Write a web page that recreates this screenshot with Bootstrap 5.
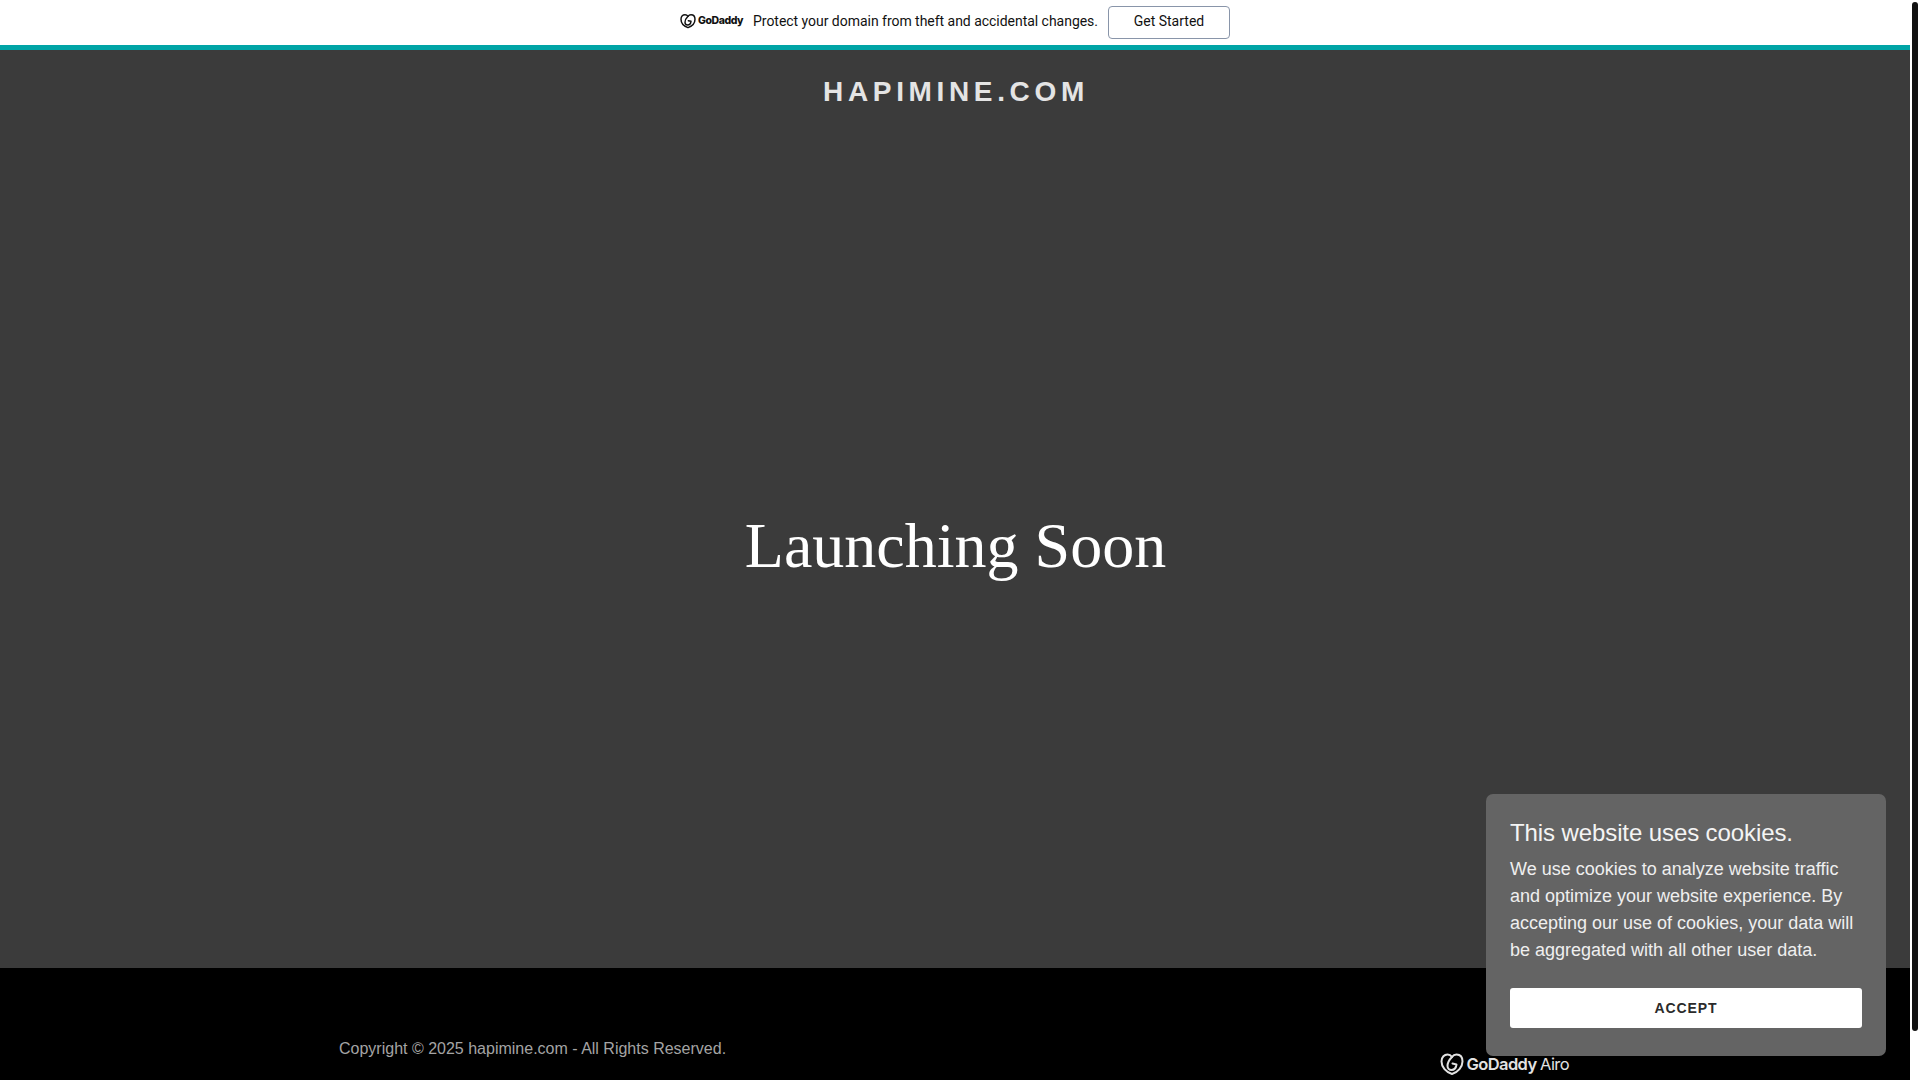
<!DOCTYPE html>
<html lang="en">
<head>
<meta charset="utf-8">
<title>hapimine.com</title>
<link href="https://cdn.jsdelivr.net/npm/bootstrap@5.3.0/dist/css/bootstrap.min.css" rel="stylesheet">
<style>
html,body{height:100%;overflow:hidden}
body{background:#fff;font-family:"Liberation Sans",Arial,sans-serif}
.shell{height:1080px}
.page-col{width:1910px;position:relative}
.track{width:10px;background:#fff}
.thumb{width:6px;height:1029px;margin:2px 2px 0 2px;background:#111;border-radius:3px}
.promo{height:45px;gap:10px;color:#111;font-family:"Roboto",sans-serif;font-size:14px;letter-spacing:-.03px}
.promo-logo{gap:2px;width:63px;margin-bottom:3px}
.promo-logo svg{width:16px;height:16px;flex:none}
.promo-word{font-family:"Inter",sans-serif;font-weight:800;font-size:10.5px;letter-spacing:-.45px;line-height:1}
.promo-text{margin-bottom:2px}
.promo-btn{width:122px;height:33px;border:1px solid #8995a9;border-radius:4px;background:#fff;color:#111;font-size:14px;padding:0 0 2px}
.promo-btn:hover{background:#fff;color:#111;border-color:#8995a9}
.rule{height:5px;background:#00a4a6}
.hero{background:#3b3b3b}
.brand{font-size:28px;font-weight:700;letter-spacing:4.65px;color:#e4e4e4;line-height:34px;padding:25px 0 0 2px;height:72px;margin:0}
.launch{font-family:"Liberation Serif","Times New Roman",serif;font-size:64px;font-weight:400;color:#fff;line-height:1.2;margin:2px 0 0 1px}
.foot{height:112px;background:#000;padding-left:339px;padding-right:341px}
.copy{color:#a4a4a4;font-size:16px;line-height:24px;margin:0 0 19px}
.airo{gap:3px;margin-bottom:4px;color:#e2e2e2}
.airo svg{width:24px;height:24px;flex:none}
.airo-word{font-family:"Inter",sans-serif;font-weight:600;font-size:16.5px;letter-spacing:-.6px;line-height:1}
.airo-tail{font-weight:400}
.cookie{position:absolute;right:24px;bottom:24px;width:400px;height:262px;background:#646464;border-radius:7px;padding:24px}
.cookie-title{font-size:24px;font-weight:400;line-height:30px;color:#f4f4f4;margin:0 0 8px;letter-spacing:-.1px}
.cookie-text{font-size:18px;line-height:27px;color:#efefef;margin:0 0 24px}
.cookie-btn{height:40px;background:#fff;color:#2b2b2b;font-size:14px;font-weight:700;letter-spacing:.9px;border:0;border-radius:3px;padding:0}
.cookie-btn:hover{background:#fff;color:#2b2b2b}
</style>
</head>
<body>
<div class="shell d-flex">
  <div class="page-col d-flex flex-column">
    <div class="promo bg-white d-flex align-items-center justify-content-center">
      <div class="promo-logo d-flex align-items-center">
        <svg viewBox="0 0 24 24" fill="none" stroke="#111" stroke-width="2.2" stroke-linecap="round" stroke-linejoin="round"><path d="M12 22C6 20 1.500 15 1.500 9.500 1.500 5 4.500 2.500 7.500 2.500 9.500 2.500 11 3.500 12 5 13 3.500 14.800 2.500 16.500 2.500 20 2.500 22.500 5 22.500 9.500 22.500 15 18 20 12 22Z"/><path d="M12 5C9 8 7.500 11 7.500 14 7.500 16.500 9.500 18 11.500 18 14 18 16 16 16.500 12.500L12.500 11.500"/></svg>
        <span class="promo-word">GoDaddy</span>
      </div>
      <span class="promo-text">Protect your domain from theft and accidental changes.</span>
      <button type="button" class="btn promo-btn">Get Started</button>
    </div>
    <div class="rule"></div>
    <main class="hero flex-fill d-flex flex-column text-center">
      <p class="brand">HAPIMINE.COM</p>
      <div class="flex-fill d-flex align-items-center justify-content-center">
        <h1 class="launch">Launching Soon</h1>
      </div>
    </main>
    <footer class="foot d-flex justify-content-between align-items-end">
      <p class="copy">Copyright © 2025 hapimine.com - All Rights Reserved.</p>
      <div class="airo d-flex align-items-center">
        <svg viewBox="0 0 24 24" fill="none" stroke="#e2e2e2" stroke-width="2" stroke-linecap="round" stroke-linejoin="round"><path d="M12 22C6 20 1.500 15 1.500 9.500 1.500 5 4.500 2.500 7.500 2.500 9.500 2.500 11 3.500 12 5 13 3.500 14.800 2.500 16.500 2.500 20 2.500 22.500 5 22.500 9.500 22.500 15 18 20 12 22Z"/><path d="M12 5C9 8 7.500 11 7.500 14 7.500 16.500 9.500 18 11.500 18 14 18 16 16 16.500 12.500L12.500 11.500"/></svg>
        <span class="airo-word">GoDaddy <span class="airo-tail">Airo</span></span>
      </div>
    </footer>
    <aside class="cookie d-flex flex-column">
      <h2 class="cookie-title">This website uses cookies.</h2>
      <p class="cookie-text">We use cookies to analyze website traffic and optimize your website experience. By accepting our use of cookies, your data will be aggregated with all other user data.</p>
      <button type="button" class="btn cookie-btn w-100">ACCEPT</button>
    </aside>
  </div>
  <div class="track"><div class="thumb"></div></div>
</div>
<script src="https://cdn.jsdelivr.net/npm/bootstrap@5.3.0/dist/js/bootstrap.bundle.min.js"></script>
</body>
</html>
